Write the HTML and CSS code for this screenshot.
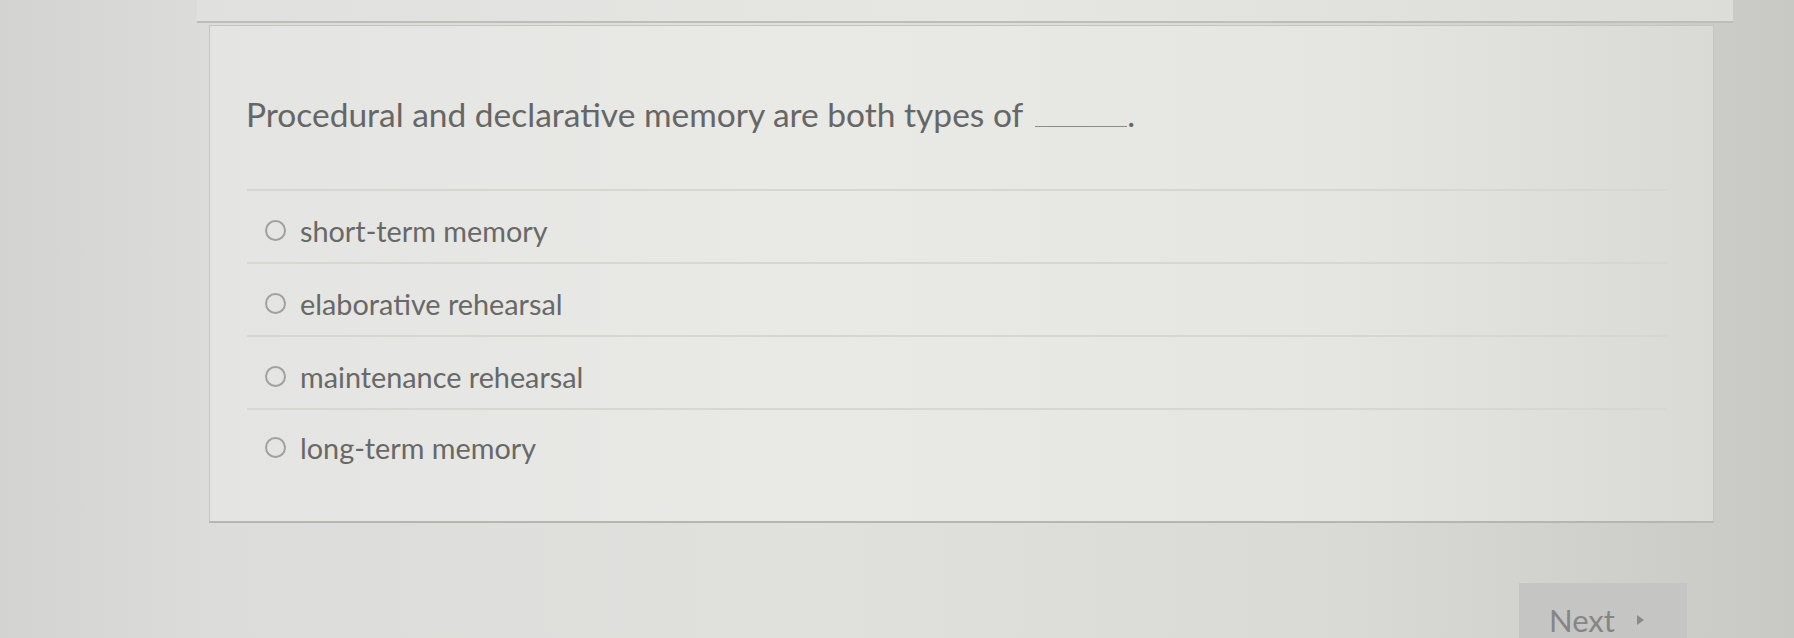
FILE: index.html
```html
<!DOCTYPE html>
<html lang="en">
<head>
<meta charset="utf-8">
<title>Question</title>
<link rel="stylesheet" href="styles.css">
</head>
<body>
  <div class="page">
    <div class="prev-card"></div>
    <section class="question-card">
      <p class="prompt">Procedural and declarative memory are both types of <span class="blank"></span>.</p>
      <ul class="choices">
        <li class="choice"><span class="radio"></span><span class="label">short-term memory</span></li>
        <li class="choice"><span class="radio"></span><span class="label">elaborative rehearsal</span></li>
        <li class="choice"><span class="radio"></span><span class="label">maintenance rehearsal</span></li>
        <li class="choice"><span class="radio"></span><span class="label">long-term memory</span></li>
      </ul>
    </section>
    <div class="footer">
      <button class="next-btn" type="button">Next <span class="caret"></span></button>
    </div>
  </div>
</body>
</html>
```

FILE: styles.css
```css
html, body {
  margin: 0;
  height: 100%;
}

body {
  font-family: Lato, "Open Sans", sans-serif;
  color: #6e6e6e;
  background:
    linear-gradient(90deg, #d3d3d1 0%, #dcdcda 12%, #e0e0dd 45%, #d9d9d6 75%, #c8c8c5 100%);
  overflow: hidden;
}

.page {
  width: 1794px;
  height: 638px;
  display: flex;
  flex-direction: column;
}

.prev-card {
  margin-left: 197px;
  width: 1536px;
  height: 21px;
  border-bottom: 2px solid #bdbdba;
  background: linear-gradient(90deg, #e0e0de 0%, #e6e6e3 50%, #dcdcd9 100%);
}

.question-card {
  margin: 2px 0 0 209px;
  width: 1505px;
  height: 498px;
  box-sizing: border-box;
  border: 1px solid #c4c4c0;
  border-bottom: 2px solid #b5b5b2;
  background: linear-gradient(90deg, #e4e4e2 0%, #e9e9e6 40%, #e5e5e1 75%, #d9d9d5 100%);
  padding: 68px 46px 0 36px;
}

.prompt {
  margin: 0;
  font-size: 33.5px;
  line-height: 40px;
  color: #666666;
}

.blank {
  display: inline-block;
  width: 92px;
  height: 1px;
  margin-left: 4px;
  border-bottom: 1px solid #8c8c8c;
  vertical-align: baseline;
}

.choices {
  list-style: none;
  margin: 55px 0 0 1px;
  padding: 0;
}

.choice {
  display: flex;
  align-items: center;
  gap: 14px;
  height: 73px;
  padding: 8px 0 0 18px;
  box-sizing: border-box;
  border-top: 2px solid #d6d6d2;
}

.choice:last-child {
  padding-top: 4px;
}

.radio {
  width: 21px;
  height: 21px;
  border: 2px solid #a0a09e;
  border-radius: 50%;
  box-sizing: border-box;
  flex: none;
}

.label {
  font-size: 28.8px;
  color: #686868;
}

.footer {
  flex: 1;
  display: flex;
  justify-content: flex-end;
  align-items: flex-end;
  padding-right: 107px;
}

.next-btn {
  width: 168px;
  height: 55px;
  margin: 0;
  border: 0;
  background: #c5c5c3;
  font-family: Lato, "Open Sans", sans-serif;
  font-size: 31px;
  color: #858585;
  display: flex;
  align-items: flex-end;
  justify-content: flex-start;
  padding: 0 0 1px 30px;
  gap: 22px;
  line-height: 34px;
}

.caret {
  width: 0;
  height: 0;
  border-left: 7px solid #8a8a8a;
  border-top: 5px solid transparent;
  border-bottom: 5px solid transparent;
  margin-bottom: 12px;
}
```
